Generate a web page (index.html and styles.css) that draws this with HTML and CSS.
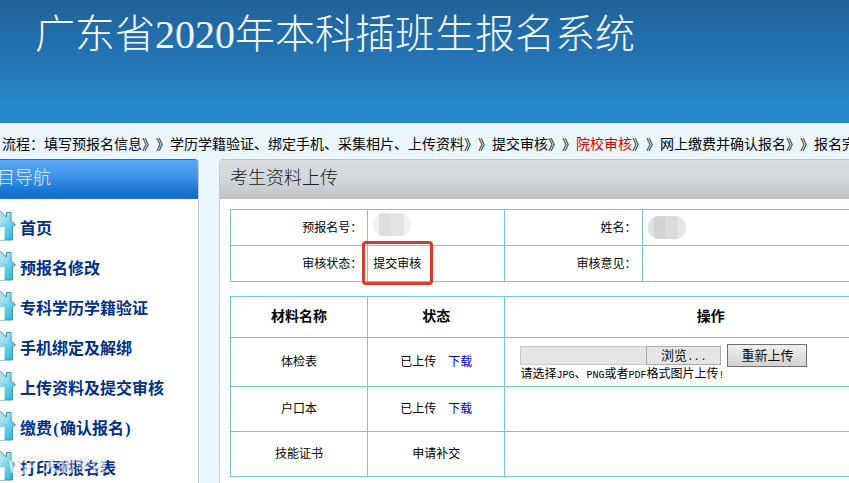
FILE: index.html
```html
<!DOCTYPE html>
<html lang="zh-CN">
<head>
<meta charset="utf-8">
<title>广东省2020年本科插班生报名系统</title>
<link rel="stylesheet" href="styles.css">
</head>
<body>
<svg width="0" height="0" class="defs" aria-hidden="true">
  <defs>
    <linearGradient id="roof" x1="0" y1="0" x2="1" y2="1">
      <stop offset="0" stop-color="#e4f8fb"/>
      <stop offset="0.45" stop-color="#a2e0ee"/>
      <stop offset="1" stop-color="#12b4dc"/>
    </linearGradient>
    <symbol id="house" viewBox="0 0 32 32">
      <path d="M1 16 L14.500 0.800 L22.500 8 V3.500 H27 V11.500 L31.500 16 L28.500 17.500 V31 H3 V17.500 Z" fill="url(#roof)" stroke="#4a8f9f" stroke-width="1" stroke-linejoin="round"/>
      <path d="M10 18 H20.500 V31 H10 Z" fill="#fff"/>
    </symbol>
  </defs>
</svg>
<header class="banner"><h1>广东省2020年本科插班生报名系统</h1></header>
<p class="steps">流程：填写预报名信息》》学历学籍验证、绑定手机、采集相片、上传资料》》提交审核》》<span class="current">院校审核</span>》》网上缴费并确认报名》》报名完成</p>
<div class="layout">
  <nav class="sidebar">
    <h2>栏目导航</h2>
    <ul>
      <li><a href="#"><svg><use href="#house"/></svg>首页</a></li>
      <li><a href="#"><svg><use href="#house"/></svg>预报名修改</a></li>
      <li><a href="#"><svg><use href="#house"/></svg>专科学历学籍验证</a></li>
      <li><a href="#"><svg><use href="#house"/></svg>手机绑定及解绑</a></li>
      <li><a href="#"><svg><use href="#house"/></svg>上传资料及提交审核</a></li>
      <li><a href="#"><svg><use href="#house"/></svg>缴费<span class="paren">(</span>确认报名<span class="paren">)</span></a></li>
      <li><a href="#"><svg><use href="#house"/></svg>打印预报名表</a>
        <div class="watermark">
          <svg viewBox="0 0 30 22"><path d="M2 5 Q1 20 11 19 Q17 18 16 12 M6 11 Q9 7 12 11 M11 7 Q12 2 16 6 Q20 1 22 6 Q27 3 27 8 Q27 12 22 11 Q18 13 16 10" /></svg>
          <span>大狐学境</span>
        </div>
      </li>
    </ul>
  </nav>
  <main class="panel">
    <h2>考生资料上传</h2>
    <div class="content">
      <table class="info">
        <tr><th scope="row">预报名号：</th><td><span class="mask"></span></td><th scope="row">姓名：</th><td class="wide"><span class="mask mask-name"></span></td></tr>
        <tr><th scope="row">审核状态：</th><td><span class="status">提交审核<span class="mark"></span></span></td><th scope="row">审核意见：</th><td></td></tr>
      </table>
      <table class="files">
        <thead><tr><th scope="col">材料名称</th><th scope="col">状态</th><th scope="col" class="ops">操作</th></tr></thead>
        <tbody>
          <tr class="tall"><td>体检表</td><td>已上传<a href="#">下载</a></td><td class="upload">
            <div class="picker"><input type="text" readonly aria-label="文件"><button type="button" class="browse">浏览<span>...</span></button><button type="button" class="send">重新上传</button></div>
            <p>请选择<span>JPG</span>、<span>PNG</span>或者<span>PDF</span>格式图片上传<span>!</span></p>
          </td></tr>
          <tr><td>户口本</td><td>已上传<a href="#">下载</a></td><td></td></tr>
          <tr><td>技能证书</td><td>申请补交</td><td></td></tr>
        </tbody>
      </table>
    </div>
  </main>
</div>
</body>
</html>
```
FILE: styles.css
```css
* { box-sizing: border-box; }
html, body { overflow: hidden; }
body {
  margin: 0;
  min-height: 100vh;
  background: #ebf6ff;
  color: #000;
  font: 12px/18px "Liberation Serif", "Noto Sans CJK SC", sans-serif;
  text-spacing-trim: space-all;
}
h1, h2, p, ul { margin: 0; padding: 0; font-weight: 300; }
a { text-decoration: none; }
.defs { position: absolute; }

.banner {
  height: 123px;
  padding: 5px 35px;
  background: linear-gradient(#206197, #2473b3 45%, #2787ca 82%, #2787ca);
}
.banner h1 { color: #f2faff; font-size: 40px; line-height: 60px; white-space: nowrap; }

.steps {
  height: 36px;
  padding: 12px 2px 0;
  font-size: 14px;
  line-height: 20px;
  font-weight: 400;
  white-space: nowrap;
  overflow: hidden;
}
.current { color: #e00000; }

.layout { display: flex; gap: 20px; margin-right: -80px; min-height: calc(100vh - 159px); }

.sidebar { flex: none; width: 199px; background: #fff; border-right: 1px solid #c5ccd6; border-top-right-radius: 4px; overflow: hidden; }
.sidebar h2 {
  height: 40px;
  margin-right: -1px;
  border: 1px solid #2874b8;
  border-left: 0;
  border-top-right-radius: 4px;
  background: linear-gradient(#5ba9f7, #3a91e6 48%, #2b83db 62%, #0d6ac9);
  color: #dcefff;
  font-size: 18px;
  line-height: 36px;
  text-indent: -21px;
}
.sidebar ul { list-style: none; padding-top: 10px; }
.sidebar li { position: relative; height: 40px; }
.sidebar a { display: flex; align-items: center; height: 40px; color: #003087; font-size: 16px; font-weight: 700; white-space: nowrap; }
.sidebar a svg { flex: none; width: 32px; height: 32px; margin: 0 4px 8px -16px; }
.paren { width: 8px; text-align: center; }
.watermark { position: absolute; left: 9px; top: 6px; display: flex; gap: 4px; align-items: center; opacity: 0.6; }
.watermark svg { width: 30px; height: 22px; fill: none; stroke: #fff; stroke-width: 3; filter: drop-shadow(0 0 1px #888); }
.watermark span { color: #fff; font-size: 16px; font-weight: 700; line-height: 22px; text-shadow: 0 0 2px #888; }

.panel { flex: 1; min-width: 0; background: #fff; border-left: 1px solid #c5ccd2; border-top-left-radius: 4px; overflow: hidden; }
.panel h2 {
  height: 40px;
  padding-left: 10px;
  border-top: 1px solid #c0c5ca;
  background: linear-gradient(#dadee1, #d1d6da 50%, #bfc4c9);
  color: #222;
  font-size: 18px;
  line-height: 36px;
}
.content { padding: 10px 12px 0 10px; }
table { width: 100%; table-layout: fixed; border-collapse: collapse; }
td, th { border: 1px solid #75c8db; padding: 0 5px; height: 36px; }
.info { margin-bottom: 14px; }
.info th { text-align: right; font-weight: 400; padding-right: 5px; }
.info .wide { width: 40%; }
.mask { display: block; width: 38px; height: 23px; margin-bottom: 6px; border-radius: 11px; background: linear-gradient(90deg, #edf3f5 15%, #dedfe1 16% 45%, #e2e3e5 46% 80%, #f0f1f2 81%); }
.mask-name { margin: 0; background: linear-gradient(90deg, #dce2e5 15%, #d2d3d5 16% 45%, #d9dadb 46% 78%, #e6e6e6 79%); }
.status { position: relative; }
.mark { position: absolute; left: -11px; top: -16px; width: 71px; height: 44px; border: 3px solid #e1382c; border-radius: 4px; }

.files { text-align: center; }
.files th { height: 41px; font-size: 14px; font-weight: 700; }
.files td { height: 45px; }
.files .tall td { height: 49px; }
.files .ops { width: 60%; }
.files a { margin-left: 12px; color: #0000c0; }
.files .upload { padding: 0 15px; text-align: left; }
.upload p { line-height: 14px; font-weight: 400; }
.upload p span { font: 10px "Liberation Mono", monospace; }
.picker { display: flex; align-items: center; height: 23px; }
.picker input { width: 126px; height: 19px; border: 1px solid #c8c8c8; border-right: 0; background: #e5e5e5; }
button { padding: 0; color: #111; font: 13px/16px "Noto Sans CJK SC", sans-serif; }
.browse { width: 75px; height: 19px; border: 1px solid #aaa; background: #e5e5e5; }
.browse span { font: 11px "Liberation Mono", monospace; }
.send { width: 80px; height: 23px; margin-left: 6px; border: 1px solid #707070; background: linear-gradient(#f0f0f0, #d2d2d2); }
```
